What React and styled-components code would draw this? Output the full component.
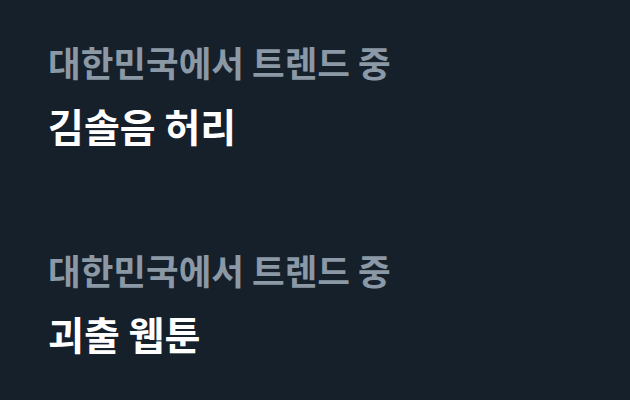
import React from "react";
import styled, { createGlobalStyle } from "styled-components";

const Global = createGlobalStyle`
  html, body {
    margin: 0;
    padding: 0;
    background: #15202b;
  }
  body {
    font-family: "Noto Sans CJK KR", "Noto Sans", sans-serif;
  }
`;

const Page = styled.div`
  width: 630px;
  height: 400px;
  background: #15202b;
  overflow: hidden;
  display: flex;
  flex-direction: column;
  gap: 94px;
  padding: 37px 48px 0;
  box-sizing: border-box;
`;

const Trend = styled.div`
  display: flex;
  flex-direction: column;
  gap: 12px;
`;

const Label = styled.div`
  color: #8b98a5;
  font-size: 35.5px;
  line-height: 50px;
  font-weight: 600;
`;

const Title = styled.div`
  color: #ffffff;
  font-size: 39px;
  line-height: 52px;
  font-weight: 700;
`;

const trends = [
  { label: "대한민국에서 트렌드 중", title: "김솔음 허리" },
  { label: "대한민국에서 트렌드 중", title: "괴출 웹툰" },
];

export default function App() {
  return (
    <>
      <Global />
      <Page>
        {trends.map((t, i) => (
          <Trend key={i}>
            <Label>{t.label}</Label>
            <Title>{t.title}</Title>
          </Trend>
        ))}
      </Page>
    </>
  );
}
